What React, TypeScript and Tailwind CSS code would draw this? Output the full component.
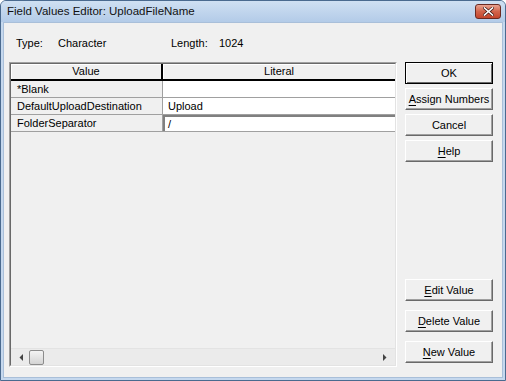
import React from 'react'

const font = { fontFamily: '"Liberation Sans", Arial, sans-serif' }

function Btn({ label, u, def }: { label: string; u?: number; def?: boolean }) {
  const parts =
    u === undefined ? (
      label
    ) : (
      <>
        {label.slice(0, u)}
        <span className="underline underline-offset-2">{label[u]}</span>
        {label.slice(u + 1)}
      </>
    )
  return (
    <div
      className={
        'h-[22px] w-[88px] flex items-center justify-center text-[11px] text-black bg-[#f0f0f0] ' +
        (def
          ? 'border border-black shadow-[inset_1px_1px_0_#fff,inset_-1px_-1px_0_#696969]'
          : 'border-t border-l border-t-white border-l-white border-b border-r border-b-[#696969] border-r-[#696969] shadow-[inset_-1px_-1px_0_#a0a0a0]')
      }
    >
      <span>{parts}</span>
    </div>
  )
}

const rows = [
  { v: '*Blank', l: '' },
  { v: 'DefaultUploadDestination', l: 'Upload' },
  { v: 'FolderSeparator', l: '/', edit: true },
]

export default function App() {
  return (
    <div className="w-[506px] h-[381px] bg-[#c5d8ee] border border-[#4a6a8f] rounded-t-[6px] flex flex-col overflow-hidden" style={font}>
      {/* title bar */}
      <div className="h-[21px] shrink-0 flex items-center justify-between pl-[6px] pr-[4px] bg-gradient-to-b from-[#cfe0f2] to-[#b3cbe8]">
        <span className="text-[11.5px] text-[#111] leading-none pt-[1px]">Field Values Editor: UploadFileName</span>
        <div className="w-[26px] h-[15px] rounded-[3px] border border-[#6b2a22] bg-gradient-to-b from-[#e8a391] via-[#d2644b] to-[#c4452c] flex items-center justify-center mt-[-1px]">
          <svg width="11" height="9" viewBox="0 0 11 9">
            <path d="M1.5 1 L9.5 8 M9.5 1 L1.5 8" stroke="#4a1f1a" strokeWidth="3" strokeLinecap="square" />
            <path d="M1.5 1 L9.5 8 M9.5 1 L1.5 8" stroke="#fff" strokeWidth="1.6" strokeLinecap="square" />
          </svg>
        </div>
      </div>

      {/* client */}
      <div className="flex-1 mx-[2px] mb-[2px] bg-[#f0f0f0] border border-[#a9bfd9] flex flex-col px-[5px] pb-[10px]">
        <div className="h-[39px] flex items-center text-[11px] text-black pl-[7px] pt-[2px]">
          <span className="w-[42px]">Type:</span>
          <span className="w-[113px]">Character</span>
          <span className="w-[48px]">Length:</span>
          <span>1024</span>
        </div>

        <div className="flex-1 flex gap-[8px]">
          {/* grid */}
          <div className="w-[388px] border border-t-[#a0a0a0] border-l-[#a0a0a0] border-b-white border-r-white flex">
            <div className="flex-1 border border-t-[#696969] border-l-[#696969] border-b-[#e3e3e3] border-r-[#e3e3e3] flex flex-col bg-[#f0f0f0]">
              <div className="h-[17px] flex text-[11px] text-black border-b-2 border-black bg-[#f0f0f0]">
                <div className="w-[152px] border-r-2 border-black flex items-center justify-center shadow-[inset_1px_1px_0_#fff]">Value</div>
                <div className="flex-1 flex items-center justify-center shadow-[inset_1px_1px_0_#fff]">Literal</div>
              </div>
              {rows.map((r) => (
                <div key={r.v} className="h-[17px] flex text-[11px] text-black border-b border-[#a0a0a0]">
                  <div className="w-[152px] border-r border-[#a0a0a0] flex items-center pl-[6px]">{r.v}</div>
                  {r.edit ? (
                    <div className="flex-1 bg-white border-t-2 border-l-2 border-t-[#808080] border-l-[#808080] flex items-center pl-[3px]">{r.l}</div>
                  ) : (
                    <div className="flex-1 bg-white flex items-center pl-[5px]">{r.l}</div>
                  )}
                </div>
              ))}
              <div className="flex-1" />
              {/* scrollbar */}
              <div className="h-[17px] flex items-center border-t border-[#e3e3e3] bg-[#ebebeb] px-[2px]">
                <div className="w-[16px] h-[16px] flex items-center justify-center">
                  <svg width="4" height="7" viewBox="0 0 4 7"><path d="M4 0 L0.5 3.5 L4 7 Z" fill="#444" /></svg>
                </div>
                <div className="w-[15px] h-[15px] rounded-[2px] border border-[#8c8c8c] bg-gradient-to-b from-[#f4f4f4] to-[#d4d4d4]" />
                <div className="flex-1" />
                <div className="w-[16px] h-[16px] flex items-center justify-center">
                  <svg width="4" height="7" viewBox="0 0 4 7"><path d="M0 0 L3.5 3.5 L0 7 Z" fill="#444" /></svg>
                </div>
              </div>
            </div>
          </div>

          {/* buttons */}
          <div className="flex flex-col">
            <div className="flex flex-col gap-[4px]">
              <Btn label="OK" def />
              <Btn label="Assign Numbers" u={0} />
              <Btn label="Cancel" />
              <Btn label="Help" u={0} />
            </div>
            <div className="flex-1" />
            <div className="flex flex-col gap-[9px] mb-[4px]">
              <Btn label="Edit Value" u={0} />
              <Btn label="Delete Value" u={0} />
              <Btn label="New Value" u={0} />
            </div>
          </div>
        </div>
      </div>
    </div>
  )
}
